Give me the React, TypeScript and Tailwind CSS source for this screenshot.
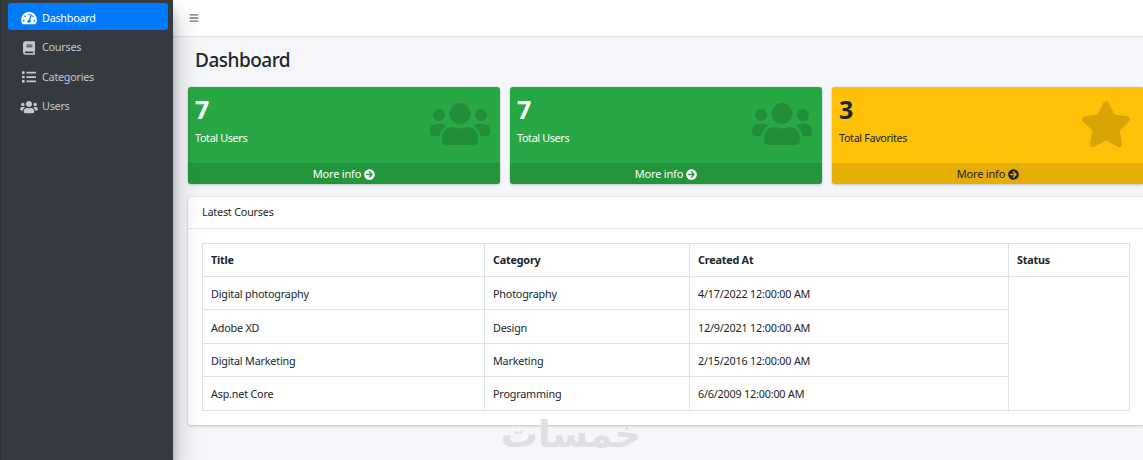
import { FaArrowCircleRight, FaBars, FaBook, FaList, FaStar, FaTachometerAlt, FaUsers } from "react-icons/fa";

const navItems = [
    { label: "Dashboard", icon: FaTachometerAlt, iconClass: "w-[16px] h-[14px]", active: true },
    { label: "Courses", icon: FaBook, iconClass: "w-[12px] h-[14px]" },
    { label: "Categories", icon: FaList, iconClass: "w-[14px] h-[14px]" },
    { label: "Users", icon: FaUsers, iconClass: "w-[18px] h-[14px]" },
];

const courses = [
    { title: "Digital photography", category: "Photography", created: "4/17/2022 12:00:00 AM" },
    { title: "Adobe XD", category: "Design", created: "12/9/2021 12:00:00 AM" },
    { title: "Digital Marketing", category: "Marketing", created: "2/15/2016 12:00:00 AM" },
    { title: "Asp.net Core", category: "Programming", created: "6/6/2009 12:00:00 AM" },
];

function StatCard({ count, label, icon: Icon, iconClass, dark }: { count: string; label: string; icon: any; iconClass: string; dark?: boolean }) {
    return <div className={`relative w-[312px] shrink-0 h-[97px] rounded-[3px] shadow-[0_0_1px_rgba(0,0,0,0.13),0_1px_3px_rgba(0,0,0,0.2)] overflow-hidden flex flex-col ${dark ? "bg-[#ffc107] text-[#212529]" : "bg-[#28a745] text-white"}`}>
        <div className="flex-1 pl-[7px] pt-[5px]">
            <div className="text-[25px] leading-[34px] font-bold">{count}</div>
            <div className="text-[10.8px] tracking-[-0.35px] leading-[16px] mt-[4px]">{label}</div>
        </div>
        <Icon className={`absolute ${iconClass} text-black/15`} />
        <div className={`h-[21px] pt-[1px] flex items-center justify-center gap-[3px] text-[11px] tracking-[-0.2px] bg-black/10 ${dark ? "text-[#212529]" : "text-white"}`}>
            More info <FaArrowCircleRight className="w-[11px] h-[11px]" />
        </div>
    </div>
}

export default function App() {
    return <div className="relative w-[1143px] h-[460px] overflow-hidden flex bg-[#f4f6f9] font-['Noto_Sans','Open_Sans',sans-serif] text-[#212529]">
        <aside className="relative z-10 w-[173px] shrink-0 bg-[#343a40] border-l border-[#2b2f33] pl-[7px] pr-[5px] pt-[3px] shadow-[0_14px_28px_rgba(0,0,0,0.25),0_10px_10px_rgba(0,0,0,0.22)]">
            {navItems.map((item) => (
                <div
                    key={item.label}
                    className={`h-[27px] mb-[2.5px] pt-[3px] flex items-center pl-[12px] rounded-[3px] text-[10.8px] tracking-[-0.25px] ${item.active ? "bg-[#007bff] text-white" : "text-[#c2c7d0]"}`}
                >
                    <span className="w-[22px] pr-[4px] flex justify-center"><item.icon className={item.iconClass} /></span>
                    {item.label}
                </div>
            ))}
        </aside>

        <main className="flex-1 min-w-0 flex flex-col">
            <header className="h-[37px] shrink-0 bg-white border-b border-[#dee2e6] flex items-center pl-[16px] text-[#6c757d]">
                <FaBars className="w-[10px] h-[10px]" />
            </header>

            <div className="pl-[15px]">
                <h1 className="pl-[7px] mt-[10px] text-[19px] tracking-[-0.5px] leading-[27px] font-medium">Dashboard</h1>

                <div className="flex gap-[10px] mt-[13px]">
                    <StatCard count="7" label="Total Users" icon={FaUsers} iconClass="right-[10px] top-[13px] w-[60px] h-[48px]" />
                    <StatCard count="7" label="Total Users" icon={FaUsers} iconClass="right-[10px] top-[13px] w-[60px] h-[48px]" />
                    <StatCard count="3" label="Total Favorites" icon={FaStar} iconClass="right-[12px] top-[13px] w-[52px] h-[48px]" dark />
                </div>

                <section className="w-[956px] mt-[13px] bg-white rounded-[3px] shadow-[0_0_1px_rgba(0,0,0,0.13),0_1px_3px_rgba(0,0,0,0.2)]">
                    <div className="h-[32px] px-[14px] flex items-center border-b border-[#e3e5e8] text-[10.8px] tracking-[-0.2px]">Latest Courses</div>
                    <div className="p-[14px]">
                        <table className="w-[927px] table-fixed border-collapse text-[10.8px] tracking-[-0.2px]">
                            <colgroup>
                                <col className="w-[282px]" />
                                <col className="w-[205px]" />
                                <col className="w-[319px]" />
                                <col className="w-[121px]" />
                            </colgroup>
                            <thead>
                                <tr className="h-[33px] text-left">
                                    {["Title", "Category", "Created At", "Status"].map((h) => (
                                        <th key={h} className="border border-[#dee2e6] px-[8px] font-bold">{h}</th>
                                    ))}
                                </tr>
                            </thead>
                            <tbody>
                                {courses.map((c, i) => (
                                    <tr key={c.title} className="h-[33.45px]">
                                        <td className="border border-[#dee2e6] px-[8px] pt-[2px]">{c.title}</td>
                                        <td className="border border-[#dee2e6] px-[8px] pt-[2px]">{c.category}</td>
                                        <td className="border border-[#dee2e6] px-[8px] pt-[2px]">{c.created}</td>
                                        {i === 0 && <td rowSpan={4} className="border border-[#dee2e6]"></td>}
                                    </tr>
                                ))}
                            </tbody>
                        </table>
                    </div>
                </section>
            </div>
        </main>

        <div dir="rtl" className="absolute left-[503px] top-[412px] w-[138px] text-center text-[37px] leading-[46px] font-bold text-[#dfe0e3] font-['DejaVu_Sans',sans-serif]">خمسات</div>
    </div>
}
